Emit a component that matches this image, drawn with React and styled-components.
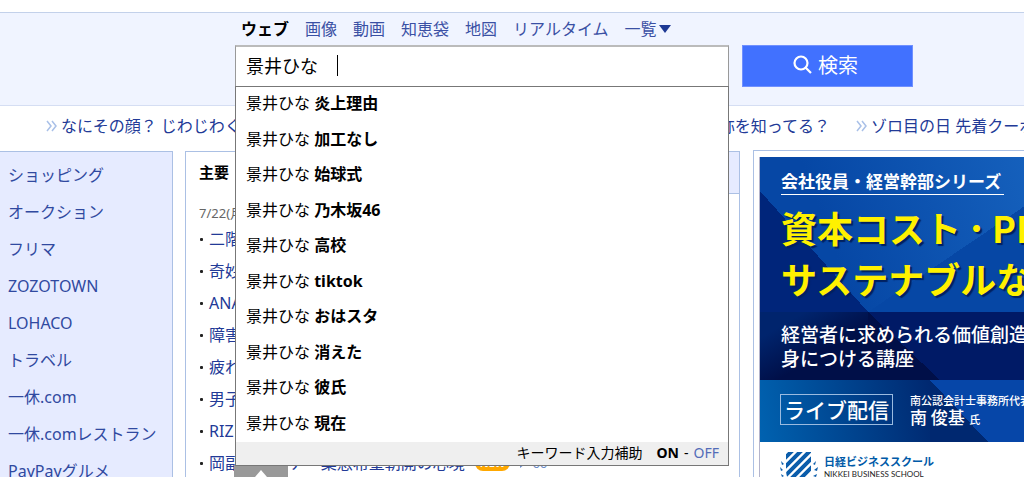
import React from 'react';
import styled, { createGlobalStyle } from 'styled-components';

const Global = createGlobalStyle`
  * { box-sizing: border-box; }
  body { margin: 0; background: #fff; color: #000; overflow: hidden;
    font: 16px/24px "Noto Sans", "Noto Sans CJK JP", sans-serif; }
  a { color: #223a97; text-decoration: none; }
  ul { list-style: none; margin: 0; padding: 0; }
  h2, p { margin: 0; }
`;
const Page = styled.div`padding-top: 12px; height: 100vh; overflow: hidden;`;
const SearchBand = styled.header`
  background: #f0f4ff; border-top: 1px solid #c3d1ea; border-bottom: 1px solid #d5def3;
  padding: 4px 0 18px 235px; height: 94px;
`;
const Tabs = styled.nav`display: flex; gap: 16px; padding-left: 6px; height: 28px; line-height: 24px; align-items: flex-start;`;
const Tab = styled.a`
  white-space: nowrap; display: flex; align-items: center; gap: 2px; color: #3a50a4;
  &[aria-current] { color: #000; font-weight: 700; }
`;
const SearchForm = styled.form`display: flex; gap: 13px;`;
const Field = styled.div`position: relative; flex: 0 0 494px; height: 42px;`;
const SearchInput = styled.input`
  width: 100%; height: 42px; border: 1px solid #999; border-top: 2px solid #bbb; background: #fff;
  padding: 0 10px 4px; font: 18px "Noto Sans", "Noto Sans CJK JP", sans-serif; outline: 0; border-radius: 0;
`;
const Caret = styled.span`position: absolute; left: 102px; top: 10px; width: 1px; height: 21px; background: #000;`;
const SearchButton = styled.button`
  flex: 0 0 171px; height: 42px; border: 1px solid #7090ff; background: #4171ff; color: #fff;
  font: 20px "Noto Sans CJK JP", sans-serif; display: flex; align-items: center; justify-content: center; gap: 6px; padding: 0 4px 3px 0;
`;
const Suggest = styled.div`
  position: absolute; z-index: 2; left: 0; right: 0; top: 41px; background: #fff; border: 1px solid #777;
`;
const SuggestItem = styled.li`height: 36px; padding: 0 10px; line-height: 32px;
  &:nth-child(even) { height: 35px; }
  b { font-weight: 700; }
`;
const SuggestFoot = styled.div`
  background: #efefef; height: 23px; padding: 0 9px; font-size: 14px; line-height: 21px;
  display: flex; justify-content: flex-end; gap: 5px; b { margin-left: 9px; } a { color: #536cb8; }
`;
const Ticker = styled.div`display: flex; height: 44px; line-height: 40px; padding-left: 46px; overflow: hidden;`;
const TickerLink = styled.a`
  flex: none; width: ${p => p.$w}px; height: 40px; display: flex; align-items: center; gap: 4px; white-space: nowrap;
  justify-content: ${p => (p.$end ? 'flex-end' : 'flex-start')}; padding-right: ${p => (p.$end ? 26 : 0)}px;
`;
const Columns = styled.div`display: grid; grid-template-columns: 173px 555px minmax(0, 1fr); column-gap: 12px; align-items: start;`;
const Services = styled.ul`
  margin-top: 1px; background: #e6ebff; border: solid #abc0e4; border-width: 1px 1px 0 0; padding: 5px 8px; min-height: 340px;
`;
const Service = styled.li`height: 37px; line-height: 37px; white-space: nowrap; a { color: #3049a0; }`;
const News = styled.section`margin-top: 1px; border: 1px solid #abc0e4; min-height: 340px;`;
const NewsTabs = styled.div`height: 42px; line-height: 40px; padding-left: 13px; display: flex; font-size: 15px; justify-content: space-between;`;
const NewsTabRest = styled.span`width: 400px; background: #e6ebff; border-bottom: 1px solid #abc0e4;`;
const NewsDate = styled.p`font-size: 13px; line-height: 20px; color: #666; padding: 9px 13px 0;`;
const NewsItem = styled.li`
  height: 32px; line-height: 32px; padding-left: 12px; display: flex; white-space: nowrap; align-items: center;
  &::before { content: ""; width: 3px; height: 3px; border-radius: 1px; background: #222; margin: 0 6px 0 2px; }
`;
const NewBadge = styled.b`
  background: #ffa800; color: #fff; font-size: 11px; line-height: 16px; height: 16px; border-radius: 8px; padding: 0 5px; margin-left: 10px;
`;
const Count = styled.span`color: #6c8dcb; font-size: 13px; margin-left: 8px; display: flex; align-items: center; gap: 6px;`;
const ToTop = styled.button`
  position: fixed; left: 234px; bottom: 0; width: 54px; height: 12px; padding: 0; border: 0; background: #999; display: flex; justify-content: center; align-items: flex-end;
`;
const AdFrame = styled.aside`border: 1px solid #abc0e4; border-right: 0; padding: 6px 0 0 5px; margin-left: 1px; overflow: hidden;`;
const Ad = styled.a`
  display: block; color: #fff; font-family: "Noto Sans CJK JP", sans-serif; white-space: nowrap; border-left: 1px solid #b4b4cc;
`;
const AdHero = styled.div`
  height: 155px; padding: 12px 0 0 21px;
  background:
    linear-gradient(to top right, #00257a 50%, transparent 50%) 0 100% / 108px 121px no-repeat,
    linear-gradient(to top left, #0647a5 50%, transparent 50%) 108px 100% / 170px 115px no-repeat,
    linear-gradient(70deg, #0647a5 30%, #1560bc);
`;
const AdSeries = styled.span`
  display: block; width: 223px; font-size: 17px; line-height: 24px; font-weight: 700; border-bottom: 1px solid #fff; height: 26px;
`;
const AdTitle = styled.strong`
  display: block; color: #fff100; font-size: 36px; line-height: 51px; font-weight: 700; text-shadow: 2px 2px 1px #002060;
  padding-top: 7px;
`;
const TitleDot = styled.span`display: inline-block; width: 31px; text-align: center;`;
const AdLead = styled.div`
  height: 68px; padding: 10px 0 0 21px; font-size: 19px; line-height: 24px; font-weight: 500;
  background:
    linear-gradient(to top right, #000f48 50%, transparent 50%) 108px 0 / 72px 68px no-repeat,
    linear-gradient(150deg, #00246d 20%, #000f48 60%) 0 0 / 108px 68px no-repeat,
    #001a66;
`;
const AdLive = styled.div`
  height: 62px; padding: 14px 0 0 20px; display: flex; gap: 17px;
  background:
    linear-gradient(to top right, #002870 50%, transparent 50%) 170px 0 / 58px 62px no-repeat,
    linear-gradient(80deg, #0062b0, #002870) 0 0 / 170px 62px no-repeat,
    #0646a8;
`;
const LiveBox = styled.span`
  flex: none; border: 1px solid #9bbbe0; height: 31px; width: 113px; text-align: center; font-size: 21px; line-height: 28px; font-weight: 500;
`;
const Speaker = styled.span`display: block; font-size: 11px; line-height: 12px; font-weight: 500; b { font-size: 17px; line-height: 22px; font-weight: 500; margin-right: 2px; }`;
const School = styled.div`height: 60px; background: #fff; padding: 8px 0 0 20px; display: flex; gap: 6px; color: #005aa8;`;
const SchoolName = styled.span`font-size: 11px; line-height: 14px; font-weight: 700; padding-top: 4px; width: 112px; flex: none;
  small { display: block; color: #222; font: 8px/12px Lato, sans-serif; }
`;

const Chevrons = () => (
  <svg width="11" height="12" viewBox="0 0 11 12" fill="none" stroke="#a9c0e8" strokeWidth="1.5" aria-hidden="true">
    <path d="M1 1l4 5-4 5M6 1l4 5-4 5" />
  </svg>
);
const Arrow = () => (
  <svg width="8" height="12" viewBox="0 0 8 12" aria-hidden="true"><path d="M1 1h6v6L2 11V7H1z" fill="#6c8dcb" /></svg>
);
const SchoolLogo = () => (
  <svg width="38" height="42" viewBox="0 0 38 42" aria-hidden="true">
    <clipPath id="shield"><path d="M6 2h25v18c0 9-5 15-12 19C11 35 6 29 6 20z" /></clipPath>
    <g clipPath="url(#shield)" fill="none" stroke="#0b5dab" strokeWidth="4">
      <path d="M0 13L14 -1M0 22L24 -2M0 31L34 -3M4 36L40 0M8 41L42 7" />
    </g>
    <g fill="#0b5dab">
      <path d="M1 11l3 3-2 1zM0 17l3 3-2 1zM1 24l3 2-2 1zM4 31l3 1-2 2zM36 11l-3 3 2 1zM38 17l-4 3 3 1zM37 24l-4 2 3 1zM34 31l-4 1 3 2z" />
    </g>
  </svg>
);

const tabs = ['ウェブ', '画像', '動画', '知恵袋', '地図', 'リアルタイム'];
const words = ['炎上理由', '加工なし', '始球式', '乃木坂46', '高校', 'tiktok', 'おはスタ', '消えた', '彼氏', '現在'];
const services = ['ショッピング', 'オークション', 'フリマ', 'ZOZOTOWN', 'LOHACO', 'トラベル', '一休.com', '一休.comレストラン', 'PayPayグルメ'];
const news = ['二階', '奇妙', 'ANA', '障害', '疲れ', '男子', 'RIZ'];

export default function App() {
  return (
    <Page>
      <Global />
      <SearchBand>
        <Tabs>
          {tabs.map((t, i) => <Tab key={t} href="#" aria-current={i === 0 ? 'page' : undefined}>{t}</Tab>)}
          <Tab href="#">一覧
            <svg width="12" height="8" viewBox="0 0 12 8" aria-hidden="true"><path d="M0 0h12L6 8z" fill="#1d3994" /></svg>
          </Tab>
        </Tabs>
        <SearchForm onSubmit={e => e.preventDefault()}>
          <Field>
            <SearchInput aria-label="検索" defaultValue="景井ひな" />
            <Caret />
            <Suggest>
              <ul>{words.map(w => <SuggestItem key={w}>景井ひな <b>{w}</b></SuggestItem>)}</ul>
              <SuggestFoot><span>キーワード入力補助</span><b>ON</b><span>-</span><a href="#">OFF</a></SuggestFoot>
            </Suggest>
          </Field>
          <SearchButton>
            <svg width="19" height="19" viewBox="0 0 19 19" fill="none" stroke="#fff" strokeWidth="2.2" aria-hidden="true">
              <circle cx="8" cy="8" r="6.5" /><path d="M12.5 12.5L18 18" />
            </svg>
            検索
          </SearchButton>
        </SearchForm>
      </SearchBand>
      <Ticker>
        <TickerLink href="#" $w={400}><Chevrons />なにその顔？ じわじわく</TickerLink>
        <TickerLink href="#" $w={410} $end>称を知ってる？</TickerLink>
        <TickerLink href="#" $w={200}><Chevrons />ゾロ目の日 先着クーポン</TickerLink>
      </Ticker>
      <Columns>
        <Services>{services.map(s => <Service key={s}><a href="#">{s}</a></Service>)}</Services>
        <News>
          <NewsTabs><b>主要</b><NewsTabRest /></NewsTabs>
          <NewsDate>7/22(月)</NewsDate>
          <ul>
            {news.map(n => <NewsItem key={n}><a href="#">{n}</a></NewsItem>)}
            <NewsItem><a href="#">岡副麻希アナ　葉恋希望朝開の心境</a><NewBadge>NEW</NewBadge><Count><Arrow />66</Count></NewsItem>
          </ul>
        </News>
        <AdFrame>
          <Ad href="#">
            <AdHero><AdSeries>会社役員・経営幹部シリーズ</AdSeries><AdTitle>資本コスト<TitleDot>･</TitleDot>PBR<br />サステナブルな</AdTitle></AdHero>
            <AdLead>経営者に求められる価値創造を<br />身につける講座</AdLead>
            <AdLive><LiveBox>ライブ配信</LiveBox><Speaker>南公認会計士事務所代表<br /><b>南 俊基</b> 氏</Speaker></AdLive>
            <School><SchoolLogo /><SchoolName>日経ビジネススクール<small>NIKKEI BUSINESS SCHOOL</small></SchoolName></School>
          </Ad>
        </AdFrame>
      </Columns>
      <ToTop aria-label="上へ"><svg width="12" height="7" viewBox="0 0 12 7" aria-hidden="true"><path d="M6 0l6 7H0z" fill="#fff" /></svg></ToTop>
    </Page>
  );
}
